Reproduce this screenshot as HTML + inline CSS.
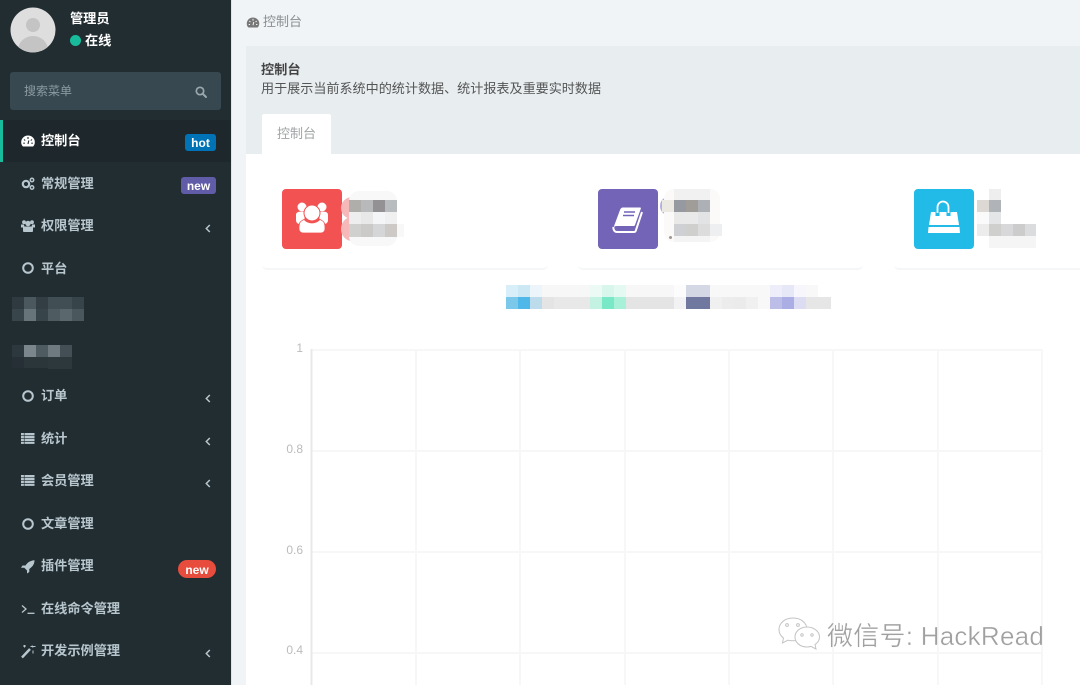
<!DOCTYPE html>
<html lang="zh"><head><meta charset="utf-8"><title>控制台</title>
<style>
html,body{margin:0;padding:0}
html{background:#f1f4f6}
body{width:1080px;height:685px;overflow:hidden;position:relative;background:#f1f4f6;font-family:"Liberation Sans","Noto Sans CJK SC",sans-serif;font-size:13px;filter:blur(.35px)}
.a{position:absolute}
.t{position:absolute;white-space:nowrap;line-height:18px}
#side{left:0;top:0;width:231px;height:685px;background:#222d32;border-right:1px solid #dfe4e8}
.m{position:absolute;left:41px;color:#b8c7ce;font-weight:700;font-size:13.2px;line-height:18px;white-space:nowrap}
.i{position:absolute;left:21px}
.chev{position:absolute;left:205px}
.b{position:absolute;color:#fff;font:700 12px/19px "Liberation Sans",sans-serif;text-align:center}
svg{display:block;overflow:visible}
.stat{position:absolute;top:189px;width:60px;height:60px;border-radius:4px}
.ln{position:absolute;top:200px;height:70px;border-bottom:2px solid #f5f6f7;border-radius:0 0 5px 5px;box-sizing:border-box}
.yl{position:absolute;color:#bbb;font:12px/14px "Liberation Sans",sans-serif;text-align:right;width:40px;left:263px}
</style></head><body>

<div class="a" id="side"></div>

<!-- user panel -->
<svg class="a" style="left:10px;top:7px" width="46" height="46" viewBox="0 0 46 46">
<defs><clipPath id="ac"><circle cx="23" cy="23" r="22.5"/></clipPath></defs>
<circle cx="23" cy="23" r="22.5" fill="#dedede"/>
<g clip-path="url(#ac)" fill="#c4c4c4"><circle cx="23" cy="18" r="7"/><ellipse cx="23" cy="43" rx="15" ry="14"/></g>
</svg>
<div class="t" style="left:70px;top:10px;color:#fff;font-weight:700;font-size:13.2px">管理员</div>
<div class="a" style="left:70px;top:35px;width:11px;height:11px;border-radius:50%;background:#18bc9c"></div>
<div class="t" style="left:85px;top:32px;color:#fff;font-weight:700;font-size:13.2px">在线</div>

<!-- search -->
<div class="a" style="left:10px;top:72px;width:211px;height:38px;background:#374850;border-radius:3px"></div>
<div class="t" style="left:24px;top:82px;color:#8c9ba1;font-size:12px">搜索菜单</div>
<svg class="a" style="left:195px;top:86px" width="12" height="12" viewBox="0 0 12 12"><circle cx="5" cy="5" r="3.7" fill="none" stroke="#9aa8ae" stroke-width="1.7"/><path d="M7.8 7.8L11 11" stroke="#9aa8ae" stroke-width="2" stroke-linecap="round"/></svg>

<!-- active row -->
<div class="a" style="left:0;top:120px;width:231px;height:42px;background:#1e282c"></div>
<div class="a" style="left:0;top:120px;width:3px;height:42px;background:#18bc9c"></div>

<!-- menu -->
<svg class="i" style="top:135px" width="14" height="12" viewBox="0 0 14 12"><path d="M7 .5C3.200 .5.200 3.500.200 7.200c0 1.500.500 2.800 1.300 3.900.200.300.500.400.800.400h9.400c.300 0 .600-.100.800-.400.800-1.100 1.300-2.400 1.300-3.900C14 3.500 10.800.500 7 .500z" fill="#fff"/><path d="M7 2v2M3 4.500l1.200 1M11 4.500l-1.200 1M2.300 8.200h1.500M10.300 8.200h1.500M7.800 5.500L7 9" stroke="#1e282c" stroke-width="1.100" fill="none"/></svg>
<div class="m" style="top:132px;color:#fff">控制台</div>
<div class="b" style="left:185px;top:134px;width:31px;height:17px;background:#0073b7;border-radius:3px">hot</div>

<svg class="i" style="top:177px" width="14" height="13" viewBox="0 0 14 13"><circle cx="5" cy="7" r="3.200" fill="none" stroke="#b8c7ce" stroke-width="2.200"/><circle cx="11" cy="3" r="1.700" fill="none" stroke="#b8c7ce" stroke-width="1.500"/><circle cx="11" cy="10.500" r="1.700" fill="none" stroke="#b8c7ce" stroke-width="1.500"/></svg>
<div class="m" style="top:175px">常规管理</div>
<div class="b" style="left:181px;top:177px;width:35px;height:17px;background:#605ca8;border-radius:3px">new</div>

<svg class="i" style="top:220px" width="14" height="12" viewBox="0 0 14 12" fill="#b8c7ce"><circle cx="3" cy="2.200" r="1.900"/><circle cx="11" cy="2.200" r="1.900"/><circle cx="7" cy="3.500" r="2.700"/><path d="M0 4.500h3l.5 3H0zM14 4.500h-3l-.5 3H14z"/><path d="M3 6.500h8c.6 0 1 .5 1 1V11c0 .5-.4 1-1 1H3c-.6 0-1-.5-1-1V7.500c0-.5.400-1 1-1z"/></svg>
<div class="m" style="top:217px">权限管理</div>
<svg class="chev" style="top:224px" width="6" height="9" viewBox="0 0 6 9"><path d="M4.800 1L1.300 4.500l3.500 3.500" fill="none" stroke="#b8c7ce" stroke-width="1.500"/></svg>

<svg class="i" style="top:262px" width="14" height="12" viewBox="0 0 14 12"><circle cx="7" cy="6" r="4.800" fill="none" stroke="#b8c7ce" stroke-width="2"/></svg>
<div class="m" style="top:260px">平台</div>

<!-- sidebar mosaics -->
<svg class="a" style="left:12px;top:297px" width="72" height="72" viewBox="0 0 72 72" shape-rendering="crispEdges">
<rect x="0" y="0" width="12" height="12" fill="#2e3a3f"/><rect x="12" y="0" width="12" height="12" fill="#4b585d"/><rect x="24" y="0" width="12" height="12" fill="#323e43"/><rect x="36" y="0" width="12" height="12" fill="#414e53"/><rect x="48" y="0" width="12" height="12" fill="#414e53"/><rect x="60" y="0" width="12" height="12" fill="#37444a"/>
<rect x="0" y="12" width="12" height="12" fill="#38454a"/><rect x="12" y="12" width="12" height="12" fill="#67747a"/><rect x="24" y="12" width="12" height="12" fill="#37444a"/><rect x="36" y="12" width="12" height="12" fill="#4e5b61"/><rect x="48" y="12" width="12" height="12" fill="#5a676d"/><rect x="60" y="12" width="12" height="12" fill="#4a575c"/>
<rect x="0" y="48" width="12" height="12" fill="#2c383d"/><rect x="12" y="48" width="12" height="12" fill="#7a868b"/><rect x="24" y="48" width="12" height="12" fill="#4e5b60"/><rect x="36" y="48" width="12" height="12" fill="#6e7a80"/><rect x="48" y="48" width="12" height="12" fill="#444f55"/>
<rect x="0" y="60" width="12" height="11" fill="#252f35"/><rect x="12" y="60" width="24" height="11" fill="#2b363b"/><rect x="36" y="60" width="24" height="12" fill="#2d383d"/>
</svg>

<svg class="i" style="top:390px" width="14" height="12" viewBox="0 0 14 12"><circle cx="7" cy="6" r="4.800" fill="none" stroke="#b8c7ce" stroke-width="2"/></svg>
<div class="m" style="top:387px">订单</div>
<svg class="chev" style="top:394px" width="6" height="9" viewBox="0 0 6 9"><path d="M4.800 1L1.300 4.500l3.500 3.500" fill="none" stroke="#b8c7ce" stroke-width="1.500"/></svg>

<svg class="i" style="top:433px" width="14" height="11" viewBox="0 0 14 11" fill="#b8c7ce"><path d="M0 0h13.500v2.200H0zM0 2.900h13.500v2.200H0zM0 5.800h13.500V8H0zM0 8.700h13.500v2.200H0z"/><path d="M3.200 0v11" stroke="#222d32" stroke-width=".6"/></svg>
<div class="m" style="top:430px">统计</div>
<svg class="chev" style="top:437px" width="6" height="9" viewBox="0 0 6 9"><path d="M4.800 1L1.300 4.500l3.500 3.500" fill="none" stroke="#b8c7ce" stroke-width="1.500"/></svg>

<svg class="i" style="top:475px" width="14" height="11" viewBox="0 0 14 11" fill="#b8c7ce"><path d="M0 0h13.500v2.200H0zM0 2.900h13.500v2.200H0zM0 5.800h13.500V8H0zM0 8.700h13.500v2.200H0z"/><path d="M3.200 0v11" stroke="#222d32" stroke-width=".6"/></svg>
<div class="m" style="top:472px">会员管理</div>
<svg class="chev" style="top:479px" width="6" height="9" viewBox="0 0 6 9"><path d="M4.800 1L1.300 4.500l3.500 3.500" fill="none" stroke="#b8c7ce" stroke-width="1.500"/></svg>

<svg class="i" style="top:518px" width="14" height="12" viewBox="0 0 14 12"><circle cx="7" cy="6" r="4.800" fill="none" stroke="#b8c7ce" stroke-width="2"/></svg>
<div class="m" style="top:515px">文章管理</div>

<svg class="i" style="top:560px" width="14" height="13" viewBox="0 0 14 13" fill="#b8c7ce"><path d="M13.500.300C9.500.500 6.500 2.500 4.500 5.500H1.500L0 7.800h3.300l2.700 2.700v3l2.300-1.500V9c3-2 5.200-4.700 5.200-8.700z"/></svg>
<div class="m" style="top:557px">插件管理</div>
<div class="b" style="left:178px;top:560px;width:38px;height:18px;line-height:20px;background:#e74c3c;border-radius:9px">new</div>

<svg class="i" style="top:603px" width="14" height="12" viewBox="0 0 14 12"><path d="M1 2.500L5 6 1 9.500" fill="none" stroke="#b8c7ce" stroke-width="1.300"/><path d="M6.500 10.300h7" stroke="#b8c7ce" stroke-width="1.300"/></svg>
<div class="m" style="top:600px">在线命令管理</div>

<svg class="i" style="top:645px" width="14" height="13" viewBox="0 0 14 13"><path d="M1 12.500L9 4" stroke="#b8c7ce" stroke-width="2.400"/><path d="M2 1h3M3.500 0v2.500M11 .500l1 2M9.500 1.500h5M12 5.500v3" stroke="#b8c7ce" stroke-width="1"/></svg>
<div class="m" style="top:642px">开发示例管理</div>
<svg class="chev" style="top:649px" width="6" height="9" viewBox="0 0 6 9"><path d="M4.800 1L1.300 4.500l3.500 3.500" fill="none" stroke="#b8c7ce" stroke-width="1.500"/></svg>

<!-- breadcrumb -->
<svg class="a" style="left:246px;top:17px" width="14" height="11" viewBox="0 0 14 12"><path d="M7 .500C3.200 .500.200 3.500.200 7.200c0 1.500.500 2.800 1.300 3.900.200.300.500.400.800.400h9.400c.300 0 .600-.100.800-.400.800-1.100 1.300-2.400 1.300-3.900C14 3.500 10.800.500 7 .500z" fill="#777"/><path d="M7 2v2M3 4.500l1.200 1M11 4.500l-1.200 1M2.300 8.200h1.500M10.300 8.200h1.500M7.800 5.500L7 9" stroke="#f1f4f6" stroke-width="1.100" fill="none"/></svg>
<div class="t" style="left:263px;top:13px;color:#8a8f93">控制台</div>

<!-- panel -->
<div class="a" style="left:246px;top:46px;width:834px;height:108px;background:#e8edf0"></div>
<div class="a" style="left:246px;top:154px;width:834px;height:531px;background:#fff"></div>
<div class="t" style="left:261px;top:61px;color:#444;font-weight:700;font-size:13.2px">控制台</div>
<div class="t" style="left:261px;top:80px;color:#555;font-size:13.08px">用于展示当前系统中的统计数据、统计报表及重要实时数据</div>
<div class="a" style="left:262px;top:114px;width:69px;height:41px;background:#fff;border-radius:2px 2px 0 0"></div>
<div class="t" style="left:277px;top:125px;color:#a0a4a6">控制台</div>

<!-- stat cards -->
<div class="ln" style="left:262px;width:286px"></div>
<div class="ln" style="left:578px;width:285px"></div>
<div class="ln" style="left:894px;width:190px"></div>

<div class="stat" style="left:282px;background:#f25252">
<svg class="a" style="left:13px;top:13px" width="34" height="32" viewBox="0 0 34 32" fill="#fff">
<circle cx="7" cy="5" r="4.500"/><circle cx="27" cy="5" r="4.500"/>
<path d="M1 13c0-2 1.500-3.200 3.500-3.200h5V22H5c-2.500 0-4-1.500-4-4zM33 13c0-2-1.500-3.200-3.500-3.200h-5V22H29c2.500 0 4-1.500 4-4z"/>
<path d="M9 17.500c2 2 5 3.500 8 3.500s6-1.500 8-3.500c3 1 5 3.500 5 7V27c0 2.500-2 4-4 4H8c-2 0-4-1.500-4-4v-2.500c0-3.500 2-6 5-7z" stroke="#f25252" stroke-width=".8"/>
<circle cx="17" cy="11" r="8" stroke="#f25252" stroke-width="1"/>
</svg>
</div>
<div class="stat" style="left:598px;background:#7364b8">
<svg class="a" style="left:0;top:0" width="60" height="60" viewBox="0 0 60 60">
<path d="M25 18.500H42c.8 0 1 .6.800 1.200L37 36c-.3.800-.8 1-1.500 1H19c-2 0-3 .7-3.500 1.500L22 21c.5-1.500 1.500-2.500 3-2.500z" fill="#fff"/>
<path d="M15.500 38c-.5 2.500 1 5 3.500 5H36c1 0 1.500-.5 1.800-1.300L44 23" fill="none" stroke="#fff" stroke-width="2"/>
<path d="M26 23h11M25 26.500h11" stroke="#7364b8" stroke-width="1.600"/>
</svg>
</div>
<div class="stat" style="left:914px;background:#22bae6">
<svg class="a" style="left:0;top:0" width="60" height="60" viewBox="0 0 60 60">
<path d="M17 23H43L45 36H15z" fill="#fff"/>
<path d="M14.500 38H45.500L46 44H14z" fill="#fff"/>
<path d="M23.500 27V18c0-3 2.500-5.500 5.500-5.500s5.500 2.500 5.500 5.500v9" fill="none" stroke="#22bae6" stroke-width="4"/>
<path d="M23.500 24V18c0-3 2.500-5.500 5.500-5.500s5.500 2.500 5.500 5.500v6" fill="none" stroke="#fff" stroke-width="1.800"/>
</svg>
</div>

<!-- blurred mosaics -->
<svg class="a" style="left:0;top:0" width="1080" height="320" viewBox="0 0 1080 320" shape-rendering="crispEdges">
<g shape-rendering="auto"><ellipse cx="352" cy="208" rx="11" ry="11" fill="#f6b8b8"/><ellipse cx="352" cy="229" rx="11" ry="12" fill="#f6b8b8"/><rect x="349" y="191" width="48" height="55" rx="10" fill="#f8f8f8"/><ellipse cx="668" cy="206" rx="8" ry="9" fill="#b6aee2"/><rect x="664" y="189" width="56" height="53" rx="10" fill="#fbfaf8"/><circle cx="670.500" cy="237.500" r="1.500" fill="#a09890"/></g>
<rect x="349" y="200" width="12" height="12" fill="#b0aeaa"/><rect x="361" y="200" width="12" height="12" fill="#b8b9ba"/><rect x="373" y="200" width="12" height="12" fill="#939194"/><rect x="385" y="200" width="12" height="12" fill="#b9bcbe"/>
<rect x="349" y="212" width="12" height="12" fill="#eeeeee"/><rect x="361" y="212" width="12" height="12" fill="#e8e8e8"/><rect x="373" y="212" width="12" height="12" fill="#f4f5f6"/><rect x="385" y="212" width="12" height="12" fill="#f0f0f0"/>
<rect x="349" y="224" width="12" height="13" fill="#d0d0ce"/><rect x="361" y="224" width="12" height="13" fill="#cccac8"/><rect x="373" y="224" width="12" height="13" fill="#d4d6d8"/><rect x="385" y="224" width="12" height="13" fill="#ccc9c6"/><rect x="397" y="224" width="7" height="13" fill="#f8f8f8"/>

<rect x="674" y="189" width="36" height="11" fill="#f0f1f0"/>
<rect x="662" y="200" width="12" height="12" fill="#ece9e3"/><rect x="674" y="200" width="12" height="12" fill="#969aa0"/><rect x="686" y="200" width="12" height="12" fill="#a09c98"/><rect x="698" y="200" width="12" height="12" fill="#adb1b5"/>
<rect x="674" y="212" width="24" height="12" fill="#e8e9e8"/><rect x="698" y="212" width="12" height="12" fill="#e2e3e4"/>
<rect x="674" y="224" width="12" height="12" fill="#ced0d3"/><rect x="686" y="224" width="12" height="12" fill="#cfcfcd"/><rect x="698" y="224" width="12" height="12" fill="#dcdcdc"/><rect x="710" y="224" width="12" height="12" fill="#eeeff0"/>
<rect x="674" y="236" width="36" height="6" fill="#f4f4f4"/>

<rect x="989" y="189" width="12" height="11" fill="#eeeeee"/>
<rect x="977" y="200" width="12" height="12" fill="#dcd8d3"/><rect x="989" y="200" width="12" height="12" fill="#b0b4b8"/>
<rect x="977" y="212" width="12" height="12" fill="#fafafa"/><rect x="989" y="212" width="12" height="12" fill="#e4e5e6"/>
<rect x="977" y="224" width="12" height="12" fill="#ececec"/><rect x="989" y="224" width="12" height="12" fill="#cfcfcd"/><rect x="1001" y="224" width="12" height="12" fill="#d8d7d9"/><rect x="1013" y="224" width="12" height="12" fill="#cdcccc"/><rect x="1025" y="224" width="11" height="12" fill="#dbdcdd"/>
<rect x="989" y="236" width="47" height="12" fill="#f5f5f5"/>

<!-- legend row 0 -->
<rect x="506" y="285" width="12" height="12" fill="#d8eef8"/><rect x="518" y="285" width="12" height="12" fill="#cce8f5"/><rect x="530" y="285" width="12" height="12" fill="#ecf6fa"/><rect x="542" y="285" width="48" height="12" fill="#f7f7f7"/>
<rect x="590" y="285" width="12" height="12" fill="#ecfaf6"/><rect x="602" y="285" width="12" height="12" fill="#d8f6ec"/><rect x="614" y="285" width="12" height="12" fill="#e4f9f2"/><rect x="626" y="285" width="48" height="12" fill="#f7f7f7"/><rect x="674" y="285" width="12" height="12" fill="#fcfcfc"/>
<rect x="686" y="285" width="24" height="12" fill="#d4d8e4"/><rect x="710" y="285" width="60" height="12" fill="#f8f8f8"/>
<rect x="770" y="285" width="12" height="12" fill="#eeeefa"/><rect x="782" y="285" width="12" height="12" fill="#e6e7f7"/><rect x="794" y="285" width="12" height="12" fill="#f6f6fc"/><rect x="806" y="285" width="12" height="12" fill="#f8f8f8"/>
<!-- legend row 1 -->
<rect x="506" y="297" width="12" height="12" fill="#7cc8ea"/><rect x="518" y="297" width="12" height="12" fill="#4fb8e8"/><rect x="530" y="297" width="12" height="12" fill="#bcdcec"/><rect x="542" y="297" width="12" height="12" fill="#e4e4e4"/><rect x="554" y="297" width="36" height="12" fill="#e8e8e8"/>
<rect x="590" y="297" width="12" height="12" fill="#c4f2e2"/><rect x="602" y="297" width="12" height="12" fill="#78e8c6"/><rect x="614" y="297" width="12" height="12" fill="#a8f0d8"/><rect x="626" y="297" width="48" height="12" fill="#e4e4e4"/><rect x="674" y="297" width="12" height="12" fill="#f2f2f4"/>
<rect x="686" y="297" width="24" height="12" fill="#70789f"/><rect x="710" y="297" width="12" height="12" fill="#f0f0f0"/><rect x="722" y="297" width="12" height="12" fill="#ececec"/><rect x="734" y="297" width="12" height="12" fill="#ebebeb"/><rect x="746" y="297" width="12" height="12" fill="#f0f0f0"/><rect x="758" y="297" width="12" height="12" fill="#f8f8f8"/>
<rect x="770" y="297" width="12" height="12" fill="#bcbee8"/><rect x="782" y="297" width="12" height="12" fill="#aaaee4"/><rect x="794" y="297" width="12" height="12" fill="#dcdcf2"/><rect x="806" y="297" width="25" height="12" fill="#e6e6e6"/>
</svg>

<!-- chart -->
<svg class="a" style="left:0;top:0" width="1080" height="685" viewBox="0 0 1080 685" shape-rendering="crispEdges">
<g stroke="#f7f7f7" stroke-width="2" fill="none">
<path d="M311 350H1042M311 451H1042M311 552H1042M311 653H1042"/>
<path d="M416 349V685M520 349V685M625 349V685M729 349V685M833 349V685M938 349V685M1042 349V685"/>
</g>
<path d="M311.500 349V685" stroke="#e8e8e8" stroke-width="2"/>
</svg>
<div class="yl" style="top:341px">1</div>
<div class="yl" style="top:442px">0.8</div>
<div class="yl" style="top:543px">0.6</div>
<div class="yl" style="top:643px">0.4</div>

<!-- watermark -->
<svg class="a" style="left:777px;top:616px" width="46" height="40" viewBox="0 0 46 40" fill="#fff" stroke="#c4c4c4" stroke-width="1">
<path d="M16 2C8 2 2 7 2 13.500c0 3.500 1.800 6.500 4.500 8.500L5.500 27l5.500-2.800c1.500.4 3 .6 5 .6 6 0 14-4 14-11.300C30 7 24 2 16 2z"/>
<path d="M30 11c-7 0-12 4.500-12 10s5 10 12 10c1.500 0 2.800-.2 4-.6l5 2.600-1-4.500c2.800-1.800 4.500-4.500 4.500-7.500C42.500 15.500 37 11 30 11z"/>
<circle cx="10" cy="9" r="1.400"/><circle cx="21" cy="9" r="1.400"/><circle cx="25" cy="19" r="1.200"/><circle cx="35" cy="19" r="1.200"/>
</svg>
<div class="t" style="left:827px;top:620px;font-size:26px;line-height:32px;letter-spacing:.25px;color:#a0a0a0;-webkit-text-stroke:.35px #fff">微信号: HackRead</div>

</body></html>
